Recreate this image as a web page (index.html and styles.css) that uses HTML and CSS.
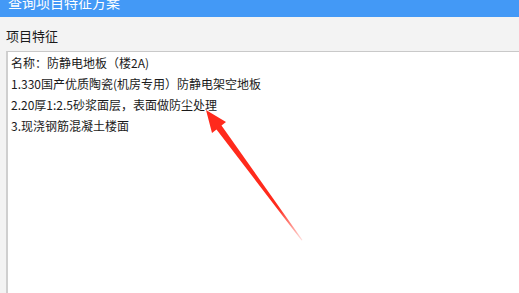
FILE: index.html
```html
<!DOCTYPE html>
<html lang="zh-CN">
<head>
    <meta charset="UTF-8">
    <title>查询项目特征方案</title>
    <link rel="stylesheet" href="styles.css">
</head>
<body>
    <header class="title-bar">
        <span class="title">查询项目特征方案</span>
    </header>

    <div class="panel">
        <div class="label">项目特征</div>
        <div class="text-box">
            <p>名称：防静电地板（楼2A)</p>
            <p>1.330国产优质陶瓷(机房专用）防静电架空地板</p>
            <p>2.20厚1:2.5砂浆面层，表面做防尘处理</p>
            <p>3.现浇钢筋混凝土楼面</p>
        </div>
    </div>

    <!-- annotation arrow drawn over the screenshot -->
    <svg class="arrow" width="519" height="293" viewBox="0 0 519 293">
        <defs>
            <linearGradient id="fade" x1="206" y1="110" x2="302" y2="240" gradientUnits="userSpaceOnUse">
                <stop offset="0" stop-color="#ff2a1c"/>
                <stop offset="0.75" stop-color="#ff2a1c"/>
                <stop offset="1" stop-color="#ff2a1c" stop-opacity="0.15"/>
            </linearGradient>
        </defs>
        <polygon fill="url(#fade)" points="206,110 226,122 221.5,125.5 302.5,240 301.5,240.5 216.5,129.5 212,133"/>
    </svg>
</body>
</html>
```

FILE: styles.css
```css
body {
    margin: 0;
    background-color: #f3f3f3;
    font-family: "Noto Sans CJK SC", "Noto Sans", sans-serif;
    color: #1a1a1a;
    overflow: hidden;
    height: 293px;
}

.title-bar {
    height: 17px;
    background-color: #4399f6;
    overflow: hidden;
}

.title {
    display: block;
    margin-top: -8px;
    padding-left: 8px;
    font-size: 14px;
    line-height: 20px;
    color: #ffffff;
}

.panel {
    padding: 10px 0 0 6px;
}

.label {
    font-size: 13px;
    line-height: 18px;
    height: 24px;
}

.text-box {
    background: #ffffff;
    border-top: 1px solid #c9c9c9;
    border-left: 2px solid #cfcfcf;
    margin-right: -20px;
    height: 241px;
    padding: 0 0 0 3px;
}

.text-box p {
    margin: 0;
    font-size: 12px;
    line-height: 21px;
    white-space: nowrap;
}

.arrow {
    position: absolute;
    left: 0;
    top: 0;
}
```
